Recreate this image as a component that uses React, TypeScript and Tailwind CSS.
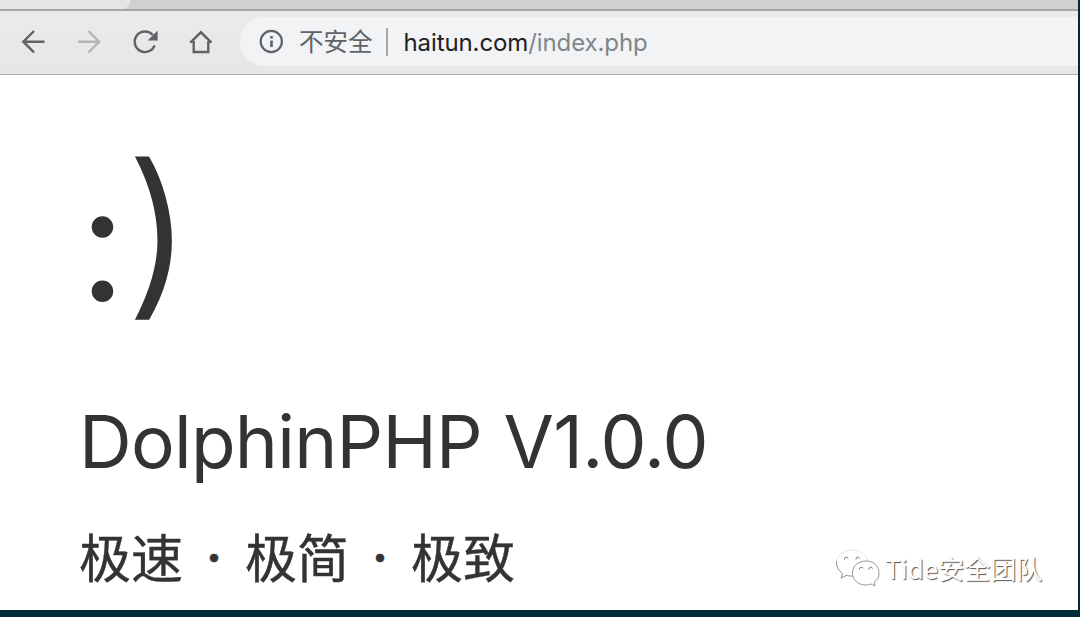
const TabStrip = () => (
  <div className="flex h-[9px] shrink-0 bg-[#d0d0d0]">
    <svg width="132" height="9" viewBox="0 0 132 9">
      <path d="M0 0H130.500C130.500 4 128 7.500 124 9H0Z" fill="#e5e5e5" />
    </svg>
  </div>
);

const NavButtons = () => (
  <svg
    width="240"
    height="63"
    viewBox="0 11 240 63"
    fill="none"
    stroke="#5f6368"
    strokeWidth="2.4"
    className="shrink-0"
  >
    {/* back */}
    <path d="M44.500 41.700H23.500M34 31L23.300 41.700L34 52.400" />
    {/* forward */}
    <path d="M78 41.700H99M88.500 31L99.200 41.700L88.500 52.400" stroke="#b4b5b7" />
    {/* reload */}
    <path d="M154.600 45.500A10.300 10.300 0 1 1 152.800 35" />
    <path d="M157.600 30.400V40.400H147.600Z" fill="#5f6368" stroke="none" />
    {/* home */}
    <path d="M190.300 42.700L200.900 32.300L211.500 42.700M193.700 41V52H208.300V41" />
  </svg>
);

const AddressBar = () => (
  <div className="mt-1.5 flex h-[49px] flex-1 items-center rounded-l-full bg-[#f1f3f4] pl-[19px]">
    <svg width="25" height="25" viewBox="0 0 25 25" fill="none" className="shrink-0">
      <circle cx="12.300" cy="12.500" r="10.600" stroke="#5f6368" strokeWidth="2.2" />
      <path d="M12.500 11.500V18M12.500 7V9.400" stroke="#5f6368" strokeWidth="2.600" />
    </svg>
    <span className="ml-[15px] pb-0.5 font-['Noto_Sans_CJK_SC',sans-serif] text-[24.5px] leading-[47px] text-[#5f6368]">
      不安全
    </span>
    <span className="ml-[13px] h-7 w-[2px] bg-[#a5a8ab]" />
    <span className="ml-4 pt-0.5 font-['Inter',sans-serif] text-[24px] leading-[47px] tracking-[-0.1px] text-[#202124]">
      haitun.com<span className="text-[#80868b]">/index.php</span>
    </span>
  </div>
);

const Dot = () => <span className="w-[62px] text-center text-[38px]">·</span>;

const WeChatMark = () => (
  <svg width="44" height="38" viewBox="0 0 44 38" fill="#fff" stroke="#8c8c8c" strokeWidth="0.9">
    <path d="M16 1C7 1 .5 6.500 .5 14C.5 18.500 2.800 22 6.500 24.500L5 29L10.500 26.300C13 27 15.500 27.200 18 27C29 26 33 19 31.500 11C30 5 24 1 16 1Z" stroke="#e2e2e2" />
    <path d="M.5 12C.5 18.500 3 22 6.500 24.500L5 29L10.500 26.300C13 27 15.500 27.200 17 27" fill="none" />
    <path d="M30 12C22 12 16.500 17 16.500 24C16.500 31 22 36 30 36C32 36 33.500 35.600 35 35L39 37L38 33.500C41.500 31 43 28 43 24C43 17 37.500 12 30 12Z" />
    <path d="M8.500 10.500A1.800 1.800 0 0 1 12 9.500M20 10.500A1.800 1.800 0 0 1 23.500 9.500M23.500 20.500A1.800 1.800 0 0 1 27 19.500M33 20.500A1.800 1.800 0 0 1 36.500 19.500" stroke="#666" />
  </svg>
);

const App: React.FC = () => {
  return (
    <div className="h-[617px] w-[1080px] overflow-hidden bg-[#002b36] pr-[2px]">
      <div className="relative flex h-[610px] flex-col bg-white">
        <TabStrip />
        <div className="flex h-[66px] shrink-0 border-t-2 border-b border-t-[#a5a5a5] border-b-[#adadad] bg-linear-to-b from-[#ebebeb] to-[#e6e6e6]">
          <NavButtons />
          <AddressBar />
        </div>

        <main className="flex flex-col items-start pl-[79px] text-[#333]">
          <h1 className="mt-[48px] flex h-[226px] items-start font-['Inter',sans-serif] leading-[216px] whitespace-nowrap">
            <span className="w-[47px] pt-[11px] text-[163px]">:</span>
            <span className="origin-left scale-x-[1.06] text-[178px] font-light [-webkit-text-stroke:1.6px_#333]">
              )
            </span>
          </h1>
          <p className="mt-[48px] h-[90px] font-['Inter',sans-serif] text-[73px] leading-[90px] tracking-[-0.75px] whitespace-nowrap [word-spacing:2px]">
            DolphinPHP V1.0.0
          </p>
          <p className="mt-[29px] flex h-[80px] font-['Noto_Sans_CJK_SC',sans-serif] text-[52px] leading-[80px] whitespace-nowrap [-webkit-text-stroke:0.4px_#333]">
            极速
            <Dot />
            极简
            <Dot />
            极致
          </p>
        </main>

        <div className="absolute top-[548px] left-[836px] flex items-center gap-[5px]">
          <WeChatMark />
          <span className="font-['Noto_Sans_CJK_SC',sans-serif] text-[26px] leading-[40px] whitespace-nowrap text-white [text-shadow:1px_1px_1px_#555]">
            Tide安全团队
          </span>
        </div>
      </div>
    </div>
  );
};

export default App;
